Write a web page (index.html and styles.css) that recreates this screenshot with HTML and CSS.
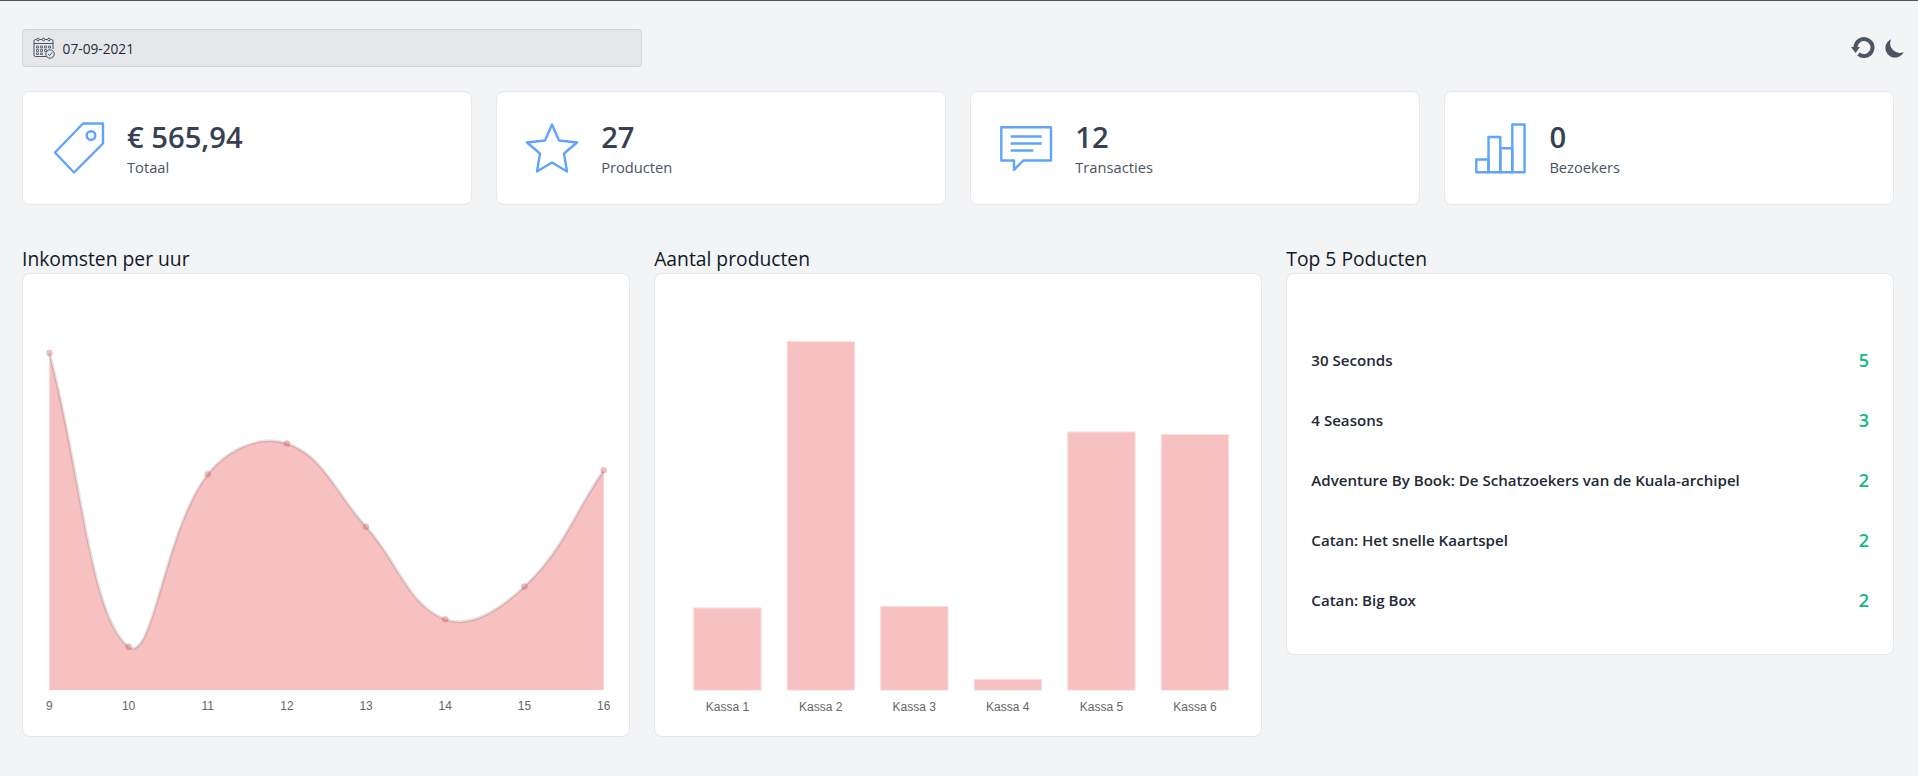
FILE: index.html
```html
<!DOCTYPE html>
<html lang="nl">
<head>
<meta charset="utf-8">
<title>Dashboard</title>
<link rel="stylesheet" href="styles.css">
</head>
<body>
<main class="page">
  <div class="toolbar">
    <div class="date-field">
      <svg class="cal-icon" viewBox="0 0 22 22" fill="none" stroke="#4b5563" stroke-width="1">
        <path d="M17 19.5H2.5a1.5 1.5 0 0 1-1.500-1.500V4a1.500 1.500 0 0 1 1.500-1.500h16A1.500 1.500 0 0 1 20 4v8"/>
        <path d="M1 6.500h19"/>
        <circle cx="5" cy="2.500" r="1.300" fill="#e5e7eb"/>
        <circle cx="10.500" cy="2.500" r="1.300" fill="#e5e7eb"/>
        <circle cx="16" cy="2.500" r="1.300" fill="#e5e7eb"/>
        <path d="M3.500 9h2v2h-2zM7.500 9h2v2h-2zM11.500 9h2v2h-2zM15.500 9h2v2h-2zM3.500 12.500h2v2h-2zM7.500 12.500h2v2h-2zM11.500 12.500h2v2h-2zM3.500 16h2v1.500h-2zM7.500 16h2v1.500h-2z" stroke-width=".8"/>
        <circle cx="17" cy="17" r="4.200" fill="#e5e7eb"/>
        <path d="M15 17l1.500 1.500 2.500-3"/>
      </svg>
      <span class="date-text">07-09-2021</span>
    </div>
    <div class="actions">
      <svg class="icon-refresh" viewBox="0 0 24 24">
        <path d="M4.500 11A8.500 8.500 0 1 1 7.500 18" fill="none" stroke="#4b5563" stroke-width="4"/>
        <path d="M0 11h9l-4.500 6z" fill="#4b5563"/>
      </svg>
      <svg class="icon-moon" viewBox="0 0 20 20">
        <path d="M17.293 13.293A8 8 0 016.707 2.707a8.001 8.001 0 1010.586 10.586z" fill="#4b5563"/>
      </svg>
    </div>
  </div>

  <section class="stats">
    <article class="card stat">
      <svg class="stat-icon" viewBox="0 0 64 64">
        <path d="M36 7.500H56V27.500L27 56.500 8 36.500Z"/>
        <circle cx="44" cy="19.500" r="4.300"/>
      </svg>
      <div>
        <div class="stat-value">€ 565,94</div>
        <div class="stat-label">Totaal</div>
      </div>
    </article>
    <article class="card stat">
      <svg class="stat-icon" viewBox="0 0 64 64">
        <path d="M31 8.500 38 24.500 56 26.500 43 37.500 46 55.500 31 46.500 16 55.500 19 37.500 6 26.500 24 24.500Z"/>
      </svg>
      <div>
        <div class="stat-value">27</div>
        <div class="stat-label">Producten</div>
      </div>
    </article>
    <article class="card stat">
      <svg class="stat-icon" viewBox="0 0 64 64">
        <path d="M6.300 11.200H56V44.500H28.300L19 53.800V44.500H6.300Z"/>
        <path d="M15.700 20.500H46.700M15.700 27.500H46.700M15.700 34.500H38.300"/>
      </svg>
      <div>
        <div class="stat-value">12</div>
        <div class="stat-label">Transacties</div>
      </div>
    </article>
    <article class="card stat">
      <svg class="stat-icon" viewBox="0 0 64 64">
        <path d="M7.300 43.500H19.500V56.200H7.300Z"/>
        <path d="M19.500 21H31.300V56.200H19.500Z"/>
        <path d="M31.300 32.200H43.300V56.200H31.300Z"/>
        <path d="M43.300 8.500H55.600V56.200H43.300Z"/>
      </svg>
      <div>
        <div class="stat-value">0</div>
        <div class="stat-label">Bezoekers</div>
      </div>
    </article>
  </section>

  <section class="panels">
    <div class="panel">
      <h2 class="panel-title">Inkomsten per uur</h2>
      <div class="card chart-card">
        <svg class="chart" viewBox="22.600 273.500 605.670 462">
          <path class="area" d="M49 352.500C80.700 470 89.200 616.300 128.200 646.200C152.500 664.800 163.600 529.900 207.300 473.800C226.900 448.600 259.600 434.100 286.500 443C322.900 455 335 492.100 365.700 526.200C398.300 562.400 407.700 604.700 444.900 618.800C471 628.700 500 608.500 524 586C563.400 548.900 571.600 516.200 603.300 469.700V689.600H49Z"/>
          <path class="line" d="M49 352.500C80.700 470 89.200 616.300 128.200 646.200C152.500 664.800 163.600 529.900 207.300 473.800C226.900 448.600 259.600 434.100 286.500 443C322.900 455 335 492.100 365.700 526.200C398.300 562.400 407.700 604.700 444.900 618.800C471 628.700 500 608.500 524 586C563.400 548.900 571.600 516.200 603.300 469.700"/>
          <g class="points">
            <circle cx="49" cy="352.500" r="3"/>
            <circle cx="128.200" cy="646.200" r="3"/>
            <circle cx="207.300" cy="473.800" r="3"/>
            <circle cx="286.500" cy="443" r="3"/>
            <circle cx="365.700" cy="526.200" r="3"/>
            <circle cx="444.900" cy="618.800" r="3"/>
            <circle cx="524" cy="586" r="3"/>
            <circle cx="603.300" cy="469.700" r="3"/>
          </g>
          <g class="ticks">
            <text x="49" y="710">9</text>
            <text x="128.200" y="710">10</text>
            <text x="207.300" y="710">11</text>
            <text x="286.500" y="710">12</text>
            <text x="365.700" y="710">13</text>
            <text x="444.900" y="710">14</text>
            <text x="524" y="710">15</text>
            <text x="603.300" y="710">16</text>
          </g>
        </svg>
      </div>
    </div>

    <div class="panel">
      <h2 class="panel-title">Aantal producten</h2>
      <div class="card chart-card">
        <svg class="chart" viewBox="655.200 273.500 605.670 462">
          <g class="bars">
            <rect x="694" y="607.500" width="67.300" height="82.100"/>
            <rect x="787.400" y="341.200" width="67.300" height="348.400"/>
            <rect x="880.900" y="606" width="67.300" height="83.600"/>
            <rect x="974.400" y="679" width="67.300" height="10.600"/>
            <rect x="1068" y="431.500" width="67.300" height="258.100"/>
            <rect x="1161.500" y="434" width="67.300" height="255.600"/>
          </g>
          <g class="ticks">
            <text x="727.600" y="710">Kassa 1</text>
            <text x="821" y="710">Kassa 2</text>
            <text x="914.500" y="710">Kassa 3</text>
            <text x="1008" y="710">Kassa 4</text>
            <text x="1101.600" y="710">Kassa 5</text>
            <text x="1195.100" y="710">Kassa 6</text>
          </g>
        </svg>
      </div>
    </div>

    <div class="panel">
      <h2 class="panel-title">Top 5 Poducten</h2>
      <div class="card top-card">
        <div class="top-row"><span class="top-name">30 Seconds</span><span class="top-count">5</span></div>
        <div class="top-row"><span class="top-name">4 Seasons</span><span class="top-count">3</span></div>
        <div class="top-row"><span class="top-name">Adventure By Book: De Schatzoekers van de Kuala-archipel</span><span class="top-count">2</span></div>
        <div class="top-row"><span class="top-name">Catan: Het snelle Kaartspel</span><span class="top-count">2</span></div>
        <div class="top-row"><span class="top-name">Catan: Big Box</span><span class="top-count">2</span></div>
      </div>
    </div>
  </section>
</main>
</body>
</html>
```

FILE: styles.css
```css
* { box-sizing: border-box; }
html, body { margin: 0; height: 100%; }
body {
  background: #f3f4f6;
  border-top: 1px solid #555;
  font-family: "Open Sans", "Noto Sans", sans-serif;
  color: #1f2937;
  overflow: hidden;
}
.page { padding: 28px 24px 0 22px; }

.toolbar { display: flex; justify-content: space-between; align-items: center; height: 38px; }
.date-field {
  width: 620px;
  height: 38px;
  display: flex;
  align-items: center;
  gap: 8px;
  padding-left: 9.6px;
  background: #e5e7eb;
  border: 1px solid #d1d5db;
  border-radius: 4px;
}
.cal-icon { width: 22px; height: 22px; }
.date-text { font-size: 13.7px; font-weight: 500; color: #1f2937; }
.actions { display: flex; align-items: center; gap: 8.5px; margin-right: -13px; }
.icon-refresh { width: 24px; height: 24px; }
.icon-moon { width: 24px; height: 24px; }

.card { background: #fff; border: 1px solid #e5e7eb; border-radius: 8px; }

.stats { display: grid; grid-template-columns: repeat(4, 1fr); gap: 24.500px; margin-top: 24px; }
.stat { height: 114px; display: flex; align-items: center; gap: 16px; padding-left: 24px; }
.stat-icon { width: 64px; height: 64px; fill: none; stroke: #60a5fa; stroke-width: 2.4; stroke-linejoin: round; flex: none; }
.stat-value { font-size: 29.2px; font-weight: 600; line-height: 36px; color: #374151; }
.stat-label { font-size: 14.7px; line-height: 20px; color: #4b5563; margin-top: 1.500px; }

.panels { display: grid; grid-template-columns: repeat(3, 1fr); gap: 24.500px; margin-top: 40px; align-items: start; }
.panel-title { margin: 0; font-size: 19.3px; font-weight: 500; line-height: 28px; color: #111827; }
.chart-card { height: 464px; }
.chart { display: block; width: 100%; height: 100%; }
.area { fill: #f7c1c1; }
.line { fill: none; stroke: rgba(0, 0, 0, .1); stroke-width: 3; }
.points circle { fill: rgba(225, 80, 80, .35); stroke: rgba(0, 0, 0, .08); stroke-width: 1; }
.ticks text { font-family: "Liberation Sans", Arial, sans-serif; font-size: 12px; fill: #666; text-anchor: middle; }
.bars rect { fill: #f7c1c1; stroke: #fadcdc; stroke-width: 1; }

.top-card { padding: 55.500px 24px 24px; }
.top-row { height: 60px; display: flex; justify-content: space-between; align-items: center; }
.top-name { font-size: 15.100px; font-weight: 600; color: #1f2937; }
.top-count { font-size: 18px; font-weight: 600; color: #10b981; }
```
